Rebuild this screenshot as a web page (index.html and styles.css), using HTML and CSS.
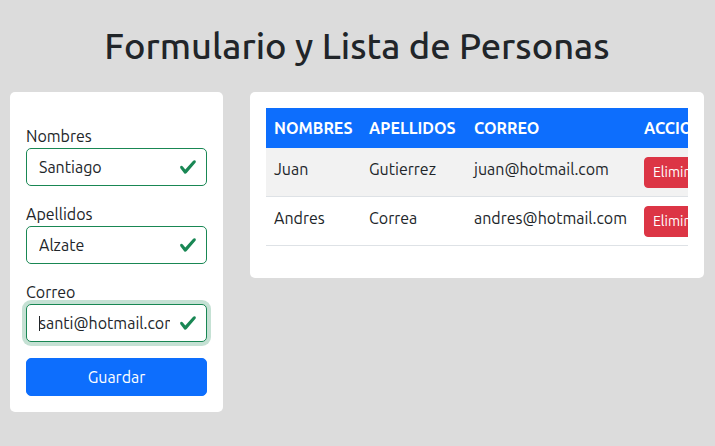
FILE: index.html
```html
<!DOCTYPE html>
<html lang="es">
<head>
<meta charset="utf-8">
<title>Formulario y Lista de Personas</title>
<link rel="stylesheet" href="styles.css">
</head>
<body>
<main class="page">
  <h1 class="title">Formulario y Lista de Personas</h1>
  <div class="layout">
    <section class="card form-card">
      <form class="form">
        <div class="field">
          <label class="label" for="nombres">Nombres</label>
          <div class="input-wrap">
            <input class="input is-valid" id="nombres" type="text" value="Santiago">
            <svg class="valid-icon" viewBox="0 0 8 8" aria-hidden="true"><path d="M2.3 6.73.6 4.53c-.4-1.04.46-1.4 1.1-.8l1.1 1.4 3.4-3.8c.6-.63 1.6-.27 1.2.7l-4 4.6c-.43.5-.8.4-1.1.1z"/></svg>
          </div>
        </div>
        <div class="field">
          <label class="label" for="apellidos">Apellidos</label>
          <div class="input-wrap">
            <input class="input is-valid" id="apellidos" type="text" value="Alzate">
            <svg class="valid-icon" viewBox="0 0 8 8" aria-hidden="true"><path d="M2.3 6.73.6 4.53c-.4-1.04.46-1.4 1.1-.8l1.1 1.4 3.4-3.8c.6-.63 1.6-.27 1.2.7l-4 4.6c-.43.5-.8.4-1.1.1z"/></svg>
          </div>
        </div>
        <div class="field">
          <label class="label" for="correo">Correo</label>
          <div class="input-wrap">
            <input class="input is-valid is-focused" id="correo" type="email" value="santi@hotmail.com">
            <span class="caret"></span>
            <svg class="valid-icon" viewBox="0 0 8 8" aria-hidden="true"><path d="M2.3 6.73.6 4.53c-.4-1.04.46-1.4 1.1-.8l1.1 1.4 3.4-3.8c.6-.63 1.6-.27 1.2.7l-4 4.6c-.43.5-.8.4-1.1.1z"/></svg>
          </div>
        </div>
        <button class="btn btn-primary btn-block" type="button">Guardar</button>
      </form>
    </section>
    <section class="card table-card">
      <div class="table-scroll">
        <table class="table">
          <colgroup>
            <col class="col-nombres">
            <col class="col-apellidos">
            <col class="col-correo">
            <col class="col-acciones">
          </colgroup>
          <thead>
            <tr><th>Nombres</th><th>Apellidos</th><th>Correo</th><th>Acciones</th></tr>
          </thead>
          <tbody>
            <tr class="striped">
              <td>Juan</td><td>Gutierrez</td><td>juan@hotmail.com</td>
              <td><button class="btn btn-danger btn-sm" type="button">Eliminar</button></td>
            </tr>
            <tr>
              <td>Andres</td><td>Correa</td><td>andres@hotmail.com</td>
              <td><button class="btn btn-danger btn-sm" type="button">Eliminar</button></td>
            </tr>
          </tbody>
        </table>
      </div>
    </section>
  </div>
</main>
</body>
</html>
```
FILE: styles.css
```css
* { box-sizing: border-box; }

html, body {
  margin: 0;
  padding: 0;
}

body {
  background: #dcdcdc;
  color: #212529;
  font-family: "Ubuntu", "Lato", sans-serif;
  font-size: 16px;
  line-height: 1.5;
}

.page {
  padding: 0 11px 0 10px;
}

.title {
  margin: 23.5px 0 25px;
  font-size: 36.3px;
  font-weight: 500;
  line-height: 1.2;
  text-align: center;
  color: #212529;
}

.layout {
  display: grid;
  grid-template-columns: 213px 454px;
  column-gap: 27px;
  align-items: start;
}

.card {
  background: #fff;
  border-radius: 5px;
  padding: 16px;
}

.form {
  margin-top: 16px;
  display: flex;
  flex-direction: column;
  gap: 16px;
}

.field {
  display: flex;
  flex-direction: column;
}

.label {
  display: block;
  line-height: 24px;
}

.input-wrap {
  position: relative;
}

.input {
  display: block;
  width: 100%;
  height: 38px;
  padding: 6px 36px 6px 12px;
  font: inherit;
  line-height: 24px;
  color: #212529;
  background: #fff;
  border: 1px solid #198754;
  border-radius: 5px;
  outline: none;
}

.input.is-focused {
  box-shadow: 0 0 0 4px rgba(25, 135, 84, 0.25);
}

.valid-icon {
  position: absolute;
  right: 10px;
  top: 10px;
  width: 18px;
  height: 18px;
  fill: #198754;
}

.caret {
  position: absolute;
  left: 13px;
  top: 12px;
  width: 1px;
  height: 15px;
  background: #212529;
}

.btn {
  font: inherit;
  display: inline-block;
  border: 1px solid transparent;
  border-radius: 5px;
  color: #fff;
  text-align: center;
  cursor: pointer;
}

.btn-primary {
  background: #0d6efd;
  border-color: #0d6efd;
  padding: 6px 12px;
  line-height: 24px;
}

.btn-block {
  display: block;
  width: 100%;
}

.btn-danger {
  background: #dc3545;
  border-color: #dc3545;
}

.btn-sm {
  padding: 4px 8px;
  font-size: 14px;
  line-height: 21px;
  border-radius: 4px;
}

.table-scroll {
  overflow: hidden;
  margin-bottom: 16px;
}

.table {
  table-layout: fixed;
  width: 466px;
  border-collapse: collapse;
}

.col-nombres { width: 95px; }
.col-apellidos { width: 105px; }
.col-correo { width: 170px; }
.col-acciones { width: 96px; }

.table th,
.table td {
  padding: 8px;
  text-align: left;
  vertical-align: top;
  white-space: nowrap;
}

.table tbody td {
  padding-top: 9px;
  border-bottom: 1px solid #dee2e6;
}

.table thead th {
  background: #0d6efd;
  color: #fff;
  font-weight: 700;
  text-transform: uppercase;
}

.table tbody tr.striped td {
  background: #f2f2f2;
}
```
